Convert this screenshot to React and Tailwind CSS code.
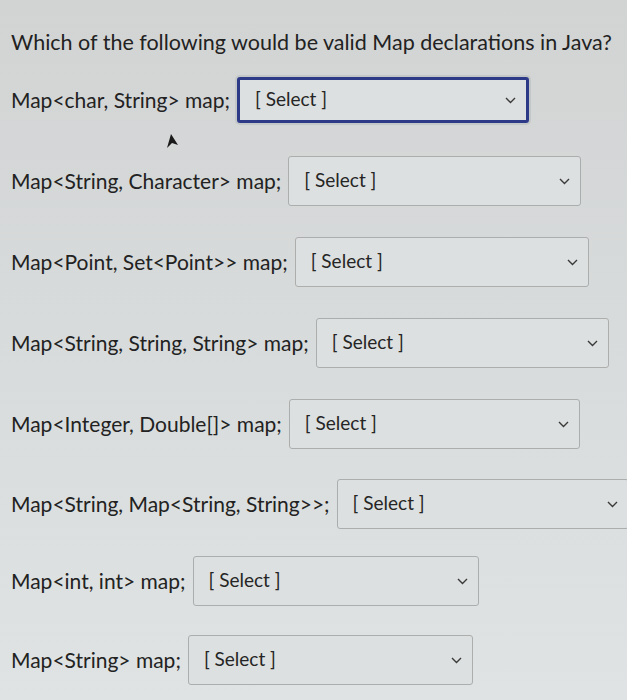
import React from 'react';

const rows = [
  { label: 'Map<char, String> map;', focused: true, w: 292, mt: 0 },
  { label: 'Map<String, Character> map;', w: 293, mt: 33 },
  { label: 'Map<Point, Set<Point>> map;', w: 294, mt: 31 },
  { label: 'Map<String, String, String> map;', w: 293, mt: 31 },
  { label: 'Map<Integer, Double[]> map;', w: 291, mt: 31 },
  { label: 'Map<String, Map<String, String>>;', w: 292, mt: 30 },
  { label: 'Map<int, int> map;', w: 286, mt: 27 },
  { label: 'Map<String> map;', w: 285, mt: 29 },
];

function Chevron() {
  return (
    <svg width="11" height="7" viewBox="0 0 11 7" className="shrink-0">
      <polyline points="1,1 5.5,5.5 10,1" fill="none" stroke="#3a3a3a" strokeWidth="1.4" />
    </svg>
  );
}

function Dropdown({ focused, w }) {
  return (
    <div
      style={{ width: w }}
      className={`shrink-0 flex items-center justify-between pl-[15px] pr-[10px] rounded-[3px] bg-[#dde0e0] ${
        focused
          ? 'h-[46px] border-[3px] border-[#2d3a88] ring-2 ring-[#c4c7c7]'
          : 'h-[50px] border border-[#acaeae]'
      }`}
    >
      <span className="text-[19px] text-[#252525] -mt-[2px]">[ Select ]</span>
      <Chevron />
    </div>
  );
}

export default function App() {
  return (
    <div className="relative w-[627px] h-[700px] overflow-hidden bg-linear-to-b from-[#d2d4d4] to-[#dfe3e3] font-['Lato','Liberation_Sans',sans-serif] text-[#222]">
      <div className="px-[11px] pt-[28px]">
        <h1 className="text-[21.5px] leading-[28px] font-normal">
          Which of the following would be valid Map declarations in Java?
        </h1>
        <div className="mt-[21px] flex flex-col">
          {rows.map((r) => (
            <div key={r.label} style={{ marginTop: r.mt }} className="flex items-center gap-[7px]">
              <span className="text-[21px] whitespace-nowrap">{r.label}</span>
              <Dropdown focused={r.focused} w={r.w} />
            </div>
          ))}
        </div>
      </div>
      {/* mouse pointer */}
      <svg className="absolute left-[163px] top-[133px]" width="16" height="18" viewBox="0 0 16 18">
        <path d="M8 1 L15 12 L9 10 L4 15 Z" fill="#1a1a1a" />
      </svg>
    </div>
  );
}
